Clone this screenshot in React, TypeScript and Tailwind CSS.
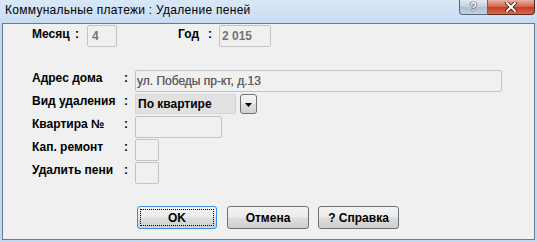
import React from "react"

const fieldBox = "border border-[#c3c3c3] rounded-[2px] bg-[#f0f0f0] h-[22px]"
const winButton =
  "h-[23px] rounded-[3px] border flex items-center justify-center font-bold text-[12px] leading-[14px] bg-[linear-gradient(#f3f3f3_0%,#ebebeb_48%,#dddddd_52%,#cfcfcf_100%)]"

function TitleBar() {
  return (
    <div className="h-[23px] flex items-start bg-[linear-gradient(#d9e8f7,#c7dcf2)]">
      <div className="pl-[5px] pt-[3px] leading-[14px] text-[12px] tracking-[0.28px] text-black">
        Коммунальные платежи : Удаление пеней
      </div>
      <div className="ml-auto mr-[2px] flex">
        <div className="w-[29px] h-[15px] border border-[#56677b] border-t-0 rounded-bl-[4px] bg-[linear-gradient(#e3e9f0,#c3cfdc_50%,#b0bfd0_51%,#c4d2e0)] flex items-center justify-center">
          <span className="text-white font-bold text-[12px] leading-[12px] [text-shadow:0_0_1px_#333,0_0_1px_#333,0_0_1px_#333]">?</span>
        </div>
        <div className="w-[47px] h-[15px] border border-[#5b2a22] border-l-0 border-t-0 rounded-br-[4px] bg-[linear-gradient(#eab1a4,#d3614b_50%,#c43b22_51%,#d8684d)] flex items-center justify-center">
          <svg width="12" height="10" viewBox="0 0 12 10">
            <path d="M2 1 L10 9 M10 1 L2 9" stroke="#3a1a14" strokeWidth="3.6" strokeLinecap="square" />
            <path d="M2 1 L10 9 M10 1 L2 9" stroke="#ffffff" strokeWidth="2" strokeLinecap="square" />
          </svg>
        </div>
      </div>
    </div>
  )
}

function Label({ text }: { text: string }) {
  return (
    <>
      <div className="w-[92px] pt-[1px] font-bold leading-[14px]">{text}</div>
      <div className="w-[11px] pt-[1px] font-bold leading-[14px]">:</div>
    </>
  )
}

export default function App() {
  return (
    <div className="w-[537px] h-[242px] bg-[#c3d9f1] flex flex-col font-['Liberation_Sans',Arial,sans-serif] text-[12px] text-black select-none">
      <TitleBar />
      <div className="ml-[2px] w-[533px] h-[217px] border border-[#6b7b8e] bg-[#f0f0f0] flex flex-col">
        {/* month / year */}
        <div className="mt-[1px] h-[22px] flex items-start pl-[29px]">
          <div className="w-[43px] pt-[2px] font-bold leading-[14px]">Месяц</div>
          <div className="w-[12px] pt-[2px] font-bold leading-[14px]">:</div>
          <div className={`${fieldBox} w-[30px] pl-[4px] pt-[3px] leading-[14px] font-bold text-[#737373]`}>4</div>
          <div className="ml-[61px] w-[30px] pt-[2px] font-bold leading-[14px]">Год</div>
          <div className="w-[11px] pt-[2px] font-bold leading-[14px]">:</div>
          <div className={`${fieldBox} w-[52px] pl-[2px] pt-[3px] leading-[14px] font-bold text-[#737373]`}>2 015</div>
        </div>

        <div className="mt-[23px] flex flex-col gap-[1px] pl-[29px]">
          <div className="h-[22px] flex items-start">
            <Label text="Адрес дома" />
            <div className={`${fieldBox} w-[367px] pl-[1px] pt-[3px] leading-[14px] text-[#5f5f5f] [text-shadow:0_0_0.4px_#6a6a6a]`}>
              ул. Победы пр-кт, д.13
            </div>
          </div>
          <div className="h-[22px] flex items-start">
            <Label text="Вид удаления" />
            <div className="mt-[1px] w-[101px] h-[20px] border border-[#d4d4d4] bg-[#e1e1e1] pl-[2px] pt-[2px] leading-[14px] font-bold">
              По квартире
            </div>
            <div className="mt-[1px] ml-[4px] w-[17px] h-[20px] border border-[#707070] rounded-[3px] bg-[linear-gradient(#f6f6f6,#e9e9e9_50%,#dcdcdc_51%,#d2d2d2)] flex items-center justify-center">
              <svg width="7" height="4" viewBox="0 0 7 4" className="mt-[2px]">
                <path d="M0 0 H7 L3.5 4 Z" fill="#000" />
              </svg>
            </div>
          </div>
          <div className="h-[22px] flex items-start">
            <Label text="Квартира №" />
            <div className={`${fieldBox} w-[87px]`} />
          </div>
          <div className="h-[22px] flex items-start">
            <Label text="Кап. ремонт" />
            <div className={`${fieldBox} w-[24px]`} />
          </div>
          <div className="h-[22px] flex items-start">
            <Label text="Удалить пени" />
            <div className={`${fieldBox} w-[24px]`} />
          </div>
        </div>

        <div className="mt-[22px] flex pl-[134px]">
          <div className={`${winButton} w-[80px] border-[#3c8ddb] p-[2px]`}>
            <div className="w-full h-full border border-dotted border-black flex items-center justify-center">OK</div>
          </div>
          <div className={`${winButton} ml-[10px] w-[82px] border-[#707070]`}>Отмена</div>
          <div className={`${winButton} ml-[9px] w-[81px] border-[#707070]`}>? Справка</div>
        </div>
      </div>
    </div>
  )
}
